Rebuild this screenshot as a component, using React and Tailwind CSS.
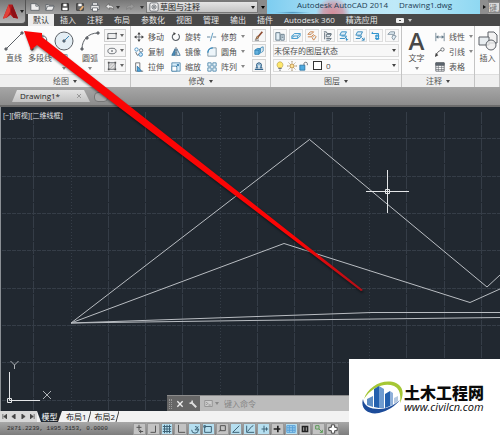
import React from "react";

const S = ({ children, className = "w-3 h-3", box = "0 0 12 12" }) => (
  <svg viewBox={box} className={className + " shrink-0"} fill="none" stroke="#5c6167" strokeWidth="1" aria-hidden="true">
    {children}
  </svg>
);

const Caret = ({ className = "text-[#444]" }) => (
  <svg viewBox="0 0 4 3" className={"w-1 h-[3px] shrink-0 " + className} aria-hidden="true">
    <path d="M0 0h4L2 3z" fill="currentColor" />
  </svg>
);

const icons = {
  newFile: <S><path d="M1 2h6l4 3v5H1z" fill="#eee" /><path d="M7 2v3h3" /></S>,
  open: <S><path d="M1 10V3h3l1 1h5v2" fill="#ddd" /><path d="M1 10l2-5h8l-2 5z" fill="#eee" /></S>,
  save: <S><path d="M2 2h8v8H2z" fill="#555" stroke="#222" /><path d="M4 2h4v3H4zM3 7h6v3H3z" fill="#fff" stroke="none" /></S>,
  saveAs: <S><path d="M2 2h8v8H2z" fill="#666" stroke="#333" /><path d="M4 2h4v3H4z" fill="#fff" stroke="none" /><path d="M6 10l4-5" stroke="#e8b070" strokeWidth="2" /></S>,
  print: <S><path d="M3 1h6v3H3z" fill="#fff" /><path d="M1 4h10v5H1z" fill="#e8e8e8" /><path d="M3 7h6v4H3z" fill="#fff" /></S>,
  undo: <S><path d="M1 5l4-3v2c4 0 6 2 5 5-1-2-2-2-5-2v2z" fill="#e4e4e4" stroke="#444" strokeWidth=".6" /></S>,
  redo: <S><path d="M11 5L7 2v2C3 4 1 6 2 9c1-2 2-2 5-2v2z" fill="#999" stroke="#777" strokeWidth=".6" /></S>,
  move: <S><path d="M6 2v8M2 6h8" /><path d="M6 0l2 3H4zM6 12l2-3H4zM0 6l3-2v4zM12 6L9 4v4z" fill="#444" stroke="none" /></S>,
  copy: <S><circle cx="3" cy="3" r="2" stroke="#3a8ac0" /><circle cx="8.500" cy="4" r="2" stroke="#5a6a78" /><circle cx="8" cy="9" r="2.200" stroke="#2b80bd" fill="#cfe8f8" /><path d="M2 6l2 4 2-1" /></S>,
  stretch: <S><path d="M2 1h5v10H2z" /><path d="M4 11V5l5 6z" fill="#58aee0" stroke="#2677b0" /><path d="M8 11h3" /></S>,
  rotate: <S><path d="M8.500 2.500A4.300 4.300 0 1 1 4 2" strokeWidth="1.300" /><path d="M3 0l3 2-3 2z" fill="#444" stroke="none" /></S>,
  mirror: <S><path d="M5 2v8H1z" fill="#4d8fbd" stroke="#336b93" /><path d="M7 2v8h4z" fill="#fff" stroke="#336b93" /><path d="M6 0v12" strokeDasharray="2 1" /></S>,
  scale: <S><path d="M1 1h10v10H1z" fill="#d8eefb" stroke="#4c84a8" /><path d="M1 5h6v6H1z" fill="#fff" stroke="#4c84a8" /><path d="M6 6l3-3M7 3h2v2" stroke="#2e75a5" /></S>,
  trim: <S><path d="M7 1L4 11" stroke="#468bb8" /><path d="M0 6h4M7 6h5" strokeDasharray="4 1" stroke="#4a7590" /></S>,
  fillet: <S><path d="M1 11V7c0-3 2-6 6-6h4v10z" fill="#edf5fa" stroke="#7b909e" /><path d="M1 7c0-3 2-6 6-6" stroke="#2f86bd" strokeWidth="1.500" /></S>,
  array: <S><path d="M1 1h4v4H1zM7 1h4v4H7zM1 7h4v4H1zM7 7h4v4H7z" fill="#eaf5fb" stroke="#4580a5" /></S>,
  erase: <S><path d="M5 7l5-6" stroke="#8e4b30" strokeWidth="2" /><path d="M2 10l2-4 2 2z" fill="#dca16c" stroke="#7c5d42" /><path d="M1 11h5" /></S>,
  explode: <S><path d="M1 5l3-2h4v5l-2 2H1z" fill="#65b1dd" stroke="#2d80b2" /><path d="M1 5h5v5M6 5l2-2M8 2l3-1v5l-2 2" stroke="#2d80b2" /></S>,
  offset: <S><path d="M1 10h10M2 8h2c-1-2-2-5 2-6 4 1 3 4 2 6h2" stroke="#33638a" strokeWidth="1.300" /><path d="M5 8c-1-2-1-3 1-4 2 1 2 2 1 4" stroke="#4c91c2" /></S>,
  rect: <S><path d="M1 3h10v6H1z" fill="#eee" /><path d="M0 8h2v2H0zM10 2h2v2h-2z" fill="#555" stroke="none" /></S>,
  ellipse: <S><ellipse cx="6" cy="6" rx="5" ry="3.300" /><path d="M6 5v2M5 6h2" /></S>,
  hatch: <S><path d="M2 2h8v8H2z" fill="#ddd" /><path d="M2 7l5-5M3 10l7-7M7 10l3-3" stroke="#999" strokeWidth=".7" /><path d="M1 1h2v2H1zM9 1h2v2H9zM1 9h2v2H1zM9 9h2v2H9z" fill="#555" stroke="none" /></S>,
  dim: <S><path d="M1 1v10M11 1v10M2 6h8" stroke="#667c8b" /><path d="M1 6l3-2v4zM11 6L8 4v4z" fill="#667c8b" stroke="none" /></S>,
  leader: <S><path d="M1 11c1-4 3-6 6-7" stroke="#444" /><path d="M0 12l1-5 3 3z" fill="#444" stroke="none" /><circle cx="9" cy="3" r="2" /></S>,
  table: <S><path d="M1 1h10v10H1z" fill="#fff" /><path d="M1 1h10v3H1z" fill="#5b6670" /><path d="M1 6.500h10M1 9h10M4 4v7M8 4v7" strokeWidth=".7" /></S>,
  bulb: <S><path d="M4 8C1 5 3 1 6 1s5 4 2 7z" fill="#ffe86b" stroke="#b39b47" strokeWidth=".8" /><path d="M4 9h4M5 11h2" /></S>,
  sun: <S><circle cx="6" cy="6" r="2.500" fill="#ffe49a" stroke="#ad7c32" /><path d="M6 0v2M6 10v2M0 6h2M10 6h2M2 2l1 1M9 9l1 1M2 10l1-1M9 3l1-1" stroke="#8f7447" /></S>,
  lock: <S><path d="M1 5h6v6H1z" fill="#4faae0" stroke="#2a74a4" /><path d="M6 5V3c0-2 4-2 4 0v2" stroke="#57606a" /></S>,
};

const layerTint = ["#6e8290", "#4d9fcf", "#d08a52", "#6e7a84", "#3d93c7", "#3f8fc0", "#3196cf", "#8a9aa6"];
const layerShapes = [
  "M1 2h5v9H1zM7 4h4v7H7zM8 6h2M8 8h2",
  "M1 6l3-3h7l-3 3zM1 9l3-3M1 9h7l3-3M1 6v3M8 6v3M11 3v3",
  "M1 4l3-3h4L5 4zM1 7h4l3-3M6 8l2 3 3-4-2-2z",
  "M1 1h3l1 2h5M4 4h6L8 7H4zM4 9h6l-2 2H4M2 2v8",
  "M3 1h6L7 5H1zM3 6h6L7 9H1M9 8v3M8 10l1 1 2-1",
  "M3 1h6L7 5H1zM3 6h5L6 9H1M8 8l3 3M11 8v3H8",
  "M1 3h8M2 1l-1 2M6 5h3v5H6zM5 6h5M5 9h5M9 3v2",
  "M1 4l3-3h5v3H1M7 5l4 1-3 5-2-3z",
];

const tabs = ["默认", "插入", "注释", "布局", "参数化", "视图", "管理", "输出", "插件", "Autodesk 360", "精选应用"];

const modify = [
  ["move", "移动"], ["rotate", "旋转"], ["trim", "修剪"],
  ["copy", "复制"], ["mirror", "镜像"], ["fillet", "圆角"],
  ["stretch", "拉伸"], ["scale", "缩放"], ["array", "阵列"],
];

function Panel({ title, className, children }) {
  return (
    <section className={"flex flex-col shrink-0 border-r border-[#c4c4c4] " + className}>
      <div className="flex h-12 pt-[3px]">{children}</div>
      <button className="flex items-center justify-center gap-1 h-[13px] bg-[#efefef] border-t border-[#dedede] text-[#555]">
        {title}
        {title && <Caret />}
      </button>
    </section>
  );
}

function BigTool({ label, caret, className, children }) {
  return (
    <button className={"flex flex-col items-center shrink-0 " + className}>
      <span className="flex items-center justify-center h-[23px]">{children}</span>
      <span className="h-[11px] leading-[11px]">{label}</span>
      {caret && <Caret className="text-[#888] mt-1" />}
    </button>
  );
}

function Tool({ icon, label, caret }) {
  return (
    <button className="flex items-center gap-1 h-[15px] whitespace-nowrap">
      <span className="flex [&>svg]:size-[10px]">{icons[icon]}</span>
      <span className="flex-1 text-left">{label}</span>
      {caret && <Caret className="text-[#888] mr-1" />}
    </button>
  );
}

function TitleBar() {
  const quick = ["newFile", "open", "save", "saveAs", "print", "undo"];
  return (
    <div className="flex h-[14px] items-center bg-linear-to-b from-[#777] to-[#a4a4a4] overflow-hidden">
      <div className="flex items-center gap-[5px] pl-1 w-[120px] shrink-0">
        {quick.map((q) => (
          <button key={q} aria-label={q} className="[&>svg]:size-[10px]">{icons[q]}</button>
        ))}
        <Caret className="text-[#333] -ml-1" />
        <button aria-label="redo" className="[&>svg]:size-[10px]">{icons.redo}</button>
        <Caret className="text-[#333]" />
      </div>
      <div className="flex items-center w-[112px] h-3 shrink-0 bg-linear-to-b from-[#e4e4e4] to-[#c4c4c4] border border-[#777] text-[#222]">
        <span className="flex pl-[2px] [&>svg]:size-[10px]">
          <S><rect x="1" y="1" width="10" height="10" rx="2" fill="#eee" /><circle cx="6" cy="6" r="2.500" /><circle cx="6" cy="6" r=".8" /></S>
        </span>
        <select aria-label="工作空间" className="flex-1 appearance-none bg-transparent h-[10px] leading-[10px] pl-[1px] outline-none">
          <option>草图与注释</option>
        </select>
        <span className="pr-[2px] flex"><Caret className="text-[#222]" /></span>
      </div>
      <span className="flex w-[9px] h-full shrink-0 items-center justify-center bg-[#8a8a8a]"><Caret className="text-black" /></span>
      <div className="flex flex-1 h-full items-start gap-[11px] pl-[30px] leading-[10px] text-[#1d3d55] whitespace-nowrap bg-[radial-gradient(circle_at_31%_100%,#d48c98_0,#c9a4b4_10px,transparent_17px),radial-gradient(ellipse_at_12%_90%,#4f94bb_0,transparent_18px),linear-gradient(90deg,#7dcdf0,#b6e3f6_35%,#bfe9f8_60%,#8fd8f2)]">
        <span>Autodesk AutoCAD 2014</span>
        <span>Drawing1.dwg</span>
      </div>
      <span className="flex w-2 h-full shrink-0 items-center justify-center bg-[#8e8e8e]">
        <svg viewBox="0 0 3 4" className="w-[3px] h-1"><path d="M0 0l3 2-3 2z" fill="#111" /></svg>
      </span>
      <input aria-label="搜索" placeholder="键入" className="w-3 h-[11px] shrink-0 bg-[#d9d9d9] border border-[#888] outline-none placeholder:text-[#777]" />
    </div>
  );
}

function Ribbon() {
  return (
    <div className="flex h-[61px] bg-[#fcfcfc] text-[#505050] overflow-hidden">
      <Panel title="绘图" className="w-[131px]">
        <BigTool label="直线" className="w-7">
          <S className="size-[20px]" box="0 0 20 20"><path d="M2 18L18 2" /><path d="M1 17h2v2H1zM17 1h2v2h-2z" fill="#777" /></S>
        </BigTool>
        <BigTool label="多段线" className="w-[24px] whitespace-nowrap">
          <S className="size-[20px]" box="0 0 20 20"><path d="M2 18L5 5h8c5 0 5 8 0 8h-3" /><path d="M1 17h2v2H1zM4 4h2v2H4z" fill="#777" /></S>
        </BigTool>
        <BigTool label="圆" caret className="w-[24px]">
          <S className="size-[20px]" box="0 0 20 20"><circle cx="10" cy="10" r="9" fill="#e4eef4" /><path d="M10 10l5-5" stroke="#3a86b5" /><path d="M9 9h2v2H9z" fill="#3a86b5" /></S>
        </BigTool>
        <BigTool label="圆弧" caret className="w-[28px]">
          <S className="size-[20px]" box="0 0 20 20"><path d="M2 18C2 9 8 2 18 2" /><path d="M1 17h2v2H1zM6 6h2v2H6zM17 1h2v2h-2z" fill="#777" /></S>
        </BigTool>
        <div className="flex flex-col gap-[2px]">
          {["rect", "ellipse", "hatch"].map((n) => (
            <button key={n} aria-label={n} className="flex items-center justify-around w-[22px] h-[13px] border border-[#d0d0d0] bg-[#f6f6f6] [&>svg:first-child]:size-[10px]">
              {icons[n]}
              <Caret className="text-[#666]" />
            </button>
          ))}
        </div>
      </Panel>

      <Panel title="修改" className="w-[140px]">
        <div className="grid grid-cols-[37px_36px_41px] pl-[3px] content-start">
          {modify.map(([icon, label], i) => <Tool key={icon} icon={icon} label={label} caret={i % 3 === 2} />)}
        </div>
        <div className="flex flex-col gap-[2px] pl-1">
          {["erase", "explode", "offset"].map((n) => (
            <button key={n} aria-label={n} className="flex items-center justify-center w-[14px] h-[13px] border border-[#d4d4d4] bg-[#f6f6f6] [&>svg]:size-[10px]">{icons[n]}</button>
          ))}
        </div>
      </Panel>

      <Panel title="图层" className="w-[131px]">
        <div className="flex flex-col flex-1 px-[2px] gap-[2px]">
          <div className="flex justify-between">
            {layerShapes.map((d, i) => (
              <button key={d} aria-label={"图层工具 " + (i + 1)} className="flex items-center justify-center w-[14px] h-[13px] border border-[#dedede] bg-[#f8f8f8]">
                <svg viewBox="0 0 12 12" className="size-[10px]" fill="#e3eff6" stroke={layerTint[i]} strokeWidth="1.200"><path d={d} /></svg>
              </button>
            ))}
          </div>
          <div className="flex items-center h-[13px] border border-[#dcdcdc] bg-[#f7f7f7] pr-[2px]">
            <select aria-label="图层状态" className="flex-1 appearance-none bg-transparent h-[11px] leading-[11px] outline-none"><option>未保存的图层状态</option></select>
            <Caret />
          </div>
          <div className="flex items-center gap-[2px] h-[13px] border border-[#dcdcdc] bg-[#fafafa] pl-[1px] pr-[2px] [&>svg]:size-[10px] [&>svg:last-child]:w-1 [&>svg:last-child]:h-[3px]">
            {icons.bulb}{icons.sun}{icons.lock}
            <span className="size-[9px] border border-[#333] bg-white ml-[2px]" />
            <select aria-label="图层" className="flex-1 appearance-none bg-transparent h-[11px] leading-[11px] pl-[2px] outline-none"><option>0</option></select>
            <Caret />
          </div>
        </div>
      </Panel>

      <Panel title="注释" className="w-[73px]">
        <BigTool label="文字" caret className="w-[29px]">
          <span className="text-[24px] leading-[23px] font-semibold text-[#484848]">A</span>
        </BigTool>
        <div className="flex flex-col flex-1 pl-1">
          <Tool icon="dim" label="线性" caret />
          <Tool icon="leader" label="引线" caret />
          <Tool icon="table" label="表格" />
        </div>
      </Panel>

      <Panel title="" className="flex-1 min-w-[25px]">
        <BigTool label="插入" className="w-[25px]">
          <S className="size-[20px]" box="0 0 20 20"><path d="M10 1h6l3 3v8h-9z" fill="#f2f2f2" /><path d="M1 6h10v8H1z" fill="#e8edf0" /><circle cx="13" cy="14" r="5" fill="#eee" fillOpacity=".8" /></S>
        </BigTool>
      </Panel>
    </div>
  );
}

const gridX = [33, 71, 108, 145, 182, 220, 257, 294, 332, 369, 406, 444, 481];
const gridY = [31, 69, 106, 143, 181, 218, 255, 293];

function Canvas() {
  return (
    <div className="relative flex-1 min-h-[304px] bg-[#212830] border-l border-[#8a8f94] overflow-hidden">
      <svg viewBox="1 0 499 304" preserveAspectRatio="xMinYMin slice" className="absolute inset-0 w-full h-full" fill="none">
        <g stroke="#353d47">
          {gridX.map((x, i) => <path key={x} d={`M${x + 0.5} 5V304`} strokeDasharray={i % 4 === 1 ? "1 2" : "12 1"} />)}
          {gridY.map((y) => <path key={y} d={`M2 ${y + 0.5}H500`} strokeDasharray="4 1" />)}
        </g>
        <g stroke="#b9bdc2" strokeWidth="1">
          <path d="M71 216L309.500 32.500 487 180l13-12" />
          <path d="M71 216L284 136.500 470 195.500 500 182" />
          <path d="M71 216L372 205.500H500" />
          <path d="M71 216L250 213.500 500 210.500" />
        </g>
        <g stroke="#e4e6e8">
          <path d="M387.500 63v43M366 84.500h43M385.500 82.500h4v4h-4z" />
          <path d="M9.500 265v28.500H40M7.500 291.500h4v4h-4z" />
          <path d="M43 284l8 8M51 284l-8 8M10.500 254l4 4 4-4M14.500 258v4" stroke="#aeb2b6" />
        </g>
      </svg>
      <p className="relative pl-[2px] pt-1 text-[7px] leading-[10px] text-[#e2e4e6]">[−][俯视][二维线框]</p>
      <div className="absolute left-[166px] right-0 bottom-0 flex h-4 items-center bg-[#bcbcbc] border-t border-[#8b8b8b]">
        <div className="flex items-center h-full w-[33px] bg-[#666] pl-[2px] gap-1">
          <span className="w-[3px] h-[10px] border-x border-dotted border-[#999]" />
          <button aria-label="关闭"><S className="size-[8px]"><path d="M2 2l8 8M10 2l-8 8" stroke="#eee" strokeWidth="2" /></S></button>
          <button aria-label="自定义"><S className="size-[9px]"><path d="M4 4l7 7" stroke="#ddd" strokeWidth="2.500" /><path d="M5 1a3 3 0 1 1-4 4l2 0 2-2z" fill="#ddd" stroke="none" /></S></button>
        </div>
        <span className="flex items-center gap-[2px] pl-1">
          <S className="size-[9px]"><path d="M1 2h10v8H1z" fill="#ccc" stroke="#888" /><path d="M3 4l2 2-2 2M6 8h3" stroke="#777" /></S>
          <Caret className="text-[#888]" />
        </span>
        <input aria-label="命令行" placeholder="键入命令" className="flex-1 min-w-0 pl-[5px] h-3 leading-3 bg-transparent outline-none placeholder:text-[#858585]" />
      </div>
    </div>
  );
}

const status = [
  ["M6 1v7M3 4h6M8 7v4M6 9h5", 0], ["M9 2v8H3", 0], ["M1 3h10M1 6h10M1 9h10M3 1v10M6 1v10M9 1v10", 1],
  ["M3 1v9h8", 0], ["M2 7a4 4 0 1 0 4-4M6 7h5M6 7l4-4", 1], ["M2 3h8v7H2zM1 2h2v2H1z", 1], ["M4 2h6v6H4zM2 9l3-2", 0],
  ["M10 2L2 10h8", 1], ["M2 2v8h9M3 9l5-6M8 3l2-1", 1], ["M6 2v8M3 6h8M9 4v4", 1], ["M7 2v8M2 6h8", 2],
  ["M1 2h10v8H1zM1 4h10M1 6h10M1 8h10M4 2v8M8 2v8", 5], ["M3 3h6v6H3zM6 3v6", 2], ["M2 2h4v4H2zM6 6l4 4M7 10h3V7", 3], ["M4 1h4v3h3v4H8v3H4V8H1V4h3z", 4],
];
const statusStroke = ["#555", "#3f6478", "#222", "#5b9b57", "#444", "#5aa0d8"];
const statusFill = ["none", "none", "none", "none", "#fff", "none"];

function StatusBar() {
  return (
    <footer className="flex h-[13px] items-center bg-linear-to-b from-[#a8a8a8] to-[#7d7d7d] overflow-hidden">
      <p className="w-[133px] shrink-0 pl-[7px] font-['Liberation_Mono',monospace] text-[6px] leading-[10px] text-[#2b2b2b] whitespace-pre">2871.2239, 1895.3153, 0.0000</p>
      <div className="flex w-[206px] shrink-0 gap-px h-3">
        {status.map(([d, tone], i) => (
          <button key={d} aria-label={"状态 " + (i + 1)} className={"flex flex-1 items-center justify-center border border-[#999] " + (tone === 1 || tone === 5 ? "bg-[#b6dff0]" : "bg-[#c3c3c3]")}>
            <svg viewBox="0 0 12 12" className="size-[10px] shrink-0" fill={statusFill[tone]} stroke={statusStroke[tone]} strokeWidth={tone === 2 ? 2 : 1.2}><path d={d} /></svg>
          </button>
        ))}
      </div>
    </footer>
  );
}

export default function App() {
  return (
    <main lang="zh-CN" className="relative flex flex-col min-h-screen overflow-hidden font-['Open_Sans','Noto_Sans_CJK_SC',sans-serif] text-[8px] leading-[10px]">
      <header className="flex h-[26px] bg-[#484848]">
        <button aria-label="应用程序菜单" className="flex items-center gap-px w-[26px] h-6 shrink-0 pl-[2px] rounded-br-sm border-r border-b border-[#555] bg-linear-to-b from-[#777] to-[#b5b5b5]">
          <svg viewBox="0 0 18 20" className="w-[17px] h-5 shrink-0">
            <path d="M1 17L7 2h4l6 15-5-1-3-3-4 3z" fill="#b51a1c" />
            <path d="M7 2l2 7-4 7-4 1z" fill="#e04038" />
            <path d="M9 9l3 7 5 1L11 2z" fill="#8e1116" />
          </svg>
          <Caret className="text-[#222]" />
        </button>
        <div className="flex flex-col flex-1 min-w-0">
          <TitleBar />
          <nav className="flex gap-px h-3 pl-[2px] text-[#e8e8e8] whitespace-nowrap">
            {tabs.map((t, i) => (
              <button key={t} className={"px-[5px] leading-3 " + (i === 0 ? "bg-[#ececec] text-[#333]" : "")}>{t}</button>
            ))}
            <button aria-label="最小化功能区" className="flex items-center gap-1 pl-3">
              <span className="w-2 h-[5px] rounded-[1px] bg-[#eee] flex items-center justify-center"><span className="w-[2px] h-px bg-[#444]" /></span>
              <Caret className="text-[#ccc]" />
            </button>
          </nav>
        </div>
      </header>

      <Ribbon />

      <div className="flex h-5 shrink-0 items-end bg-linear-to-b from-[#a6a6a6] to-[#8c8c8c] border-b-2 border-[#6c6c6c] pl-3 pb-[3px]">
        <button className="flex items-center justify-between w-[78px] h-3 pl-2 pr-2 text-[#222] bg-linear-to-b from-[#e2e2e2] to-[#c4c4c4] [clip-path:polygon(5px_0,72px_0,78px_100%,0_100%)]">
          Drawing1*
          <S className="size-[6px]"><path d="M2 2l8 8M10 2l-8 8" stroke="#999" strokeWidth="2" /></S>
        </button>
        <button aria-label="新图形" className="ml-1 w-[14px] h-[10px] rounded-sm border border-[#777] bg-[#aaa]" />
      </div>

      <Canvas />

      <div className="flex h-[11px] shrink-0 items-stretch bg-[#f2f2f2] text-[#111]">
        <div className="flex items-center w-[37px] justify-around bg-[#d8d8d8] text-[#444]">
          {["M1 0v6M6 0L2 3l4 3z", "M5 0L1 3l4 3z", "M1 0l4 3-4 3z", "M0 0l4 3-4 3zM5 0v6"].map((d, i) => (
            <button key={d} aria-label={"布局导航 " + (i + 1)}><svg viewBox="0 0 6 6" className="size-[5px]" fill="currentColor" stroke="currentColor" strokeWidth=".8"><path d={d} /></svg></button>
          ))}
        </div>
        <button className="w-[25px] bg-[#212830] text-white leading-[11px] [clip-path:polygon(0_0,100%_0,21px_100%,4px_100%)]">模型</button>
        {["布局1", "布局2"].map((t) => (
          <button key={t} className="flex items-center pl-1 leading-[11px]">
            {t}
            <svg viewBox="0 0 4 11" className="w-1 h-[11px]"><path d="M4 0L1 11" stroke="#444" /></svg>
          </button>
        ))}
      </div>

      <StatusBar />

      <svg viewBox="0 0 370 300" className="absolute left-0 top-0 w-[370px] h-[300px] pointer-events-none drop-shadow-[1px_2px_1px_rgba(0,0,0,0.5)]">
        <defs>
          <linearGradient id="shaft" x1="0" y1="0" x2="1" y2="1">
            <stop offset=".8" stopColor="#fb0505" />
            <stop offset="1" stopColor="#b01018" />
          </linearGradient>
        </defs>
        <path d="M24 31L42 33 42 37 363 290 361 291 37 45 31 50z" fill="url(#shaft)" />
      </svg>

      <aside className="absolute right-0 bottom-0 flex items-center w-[151px] h-[76px] pl-[13px] bg-white">
        <svg viewBox="0 0 42 36" className="w-[42px] h-9 shrink-0" fill="none">
          <path d="M2 20C6 7 22-1 34 4c8 4 8 12 4 20 1-8 0-14-6-17C22 3 9 9 2 20z" fill="#a5c735" />
          <path d="M1 20c-3 10 5 16 16 14 9-2 16-7 21-13-7 6-14 9-21 9C8 30 2 27 1 20z" fill="#1d4c9a" />
          <path d="M5 20l6-3v11l-6-2z" fill="#5d8cc4" />
          <path d="M12 10l5-3v22l-5-1z" fill="#2460ae" />
          <path d="M17 7l5 3v19h-5z" fill="#6f9bd0" />
          <path d="M23 15l5-3v15l-5 2z" fill="#2460ae" />
          <path d="M28 12l3 2v12l-3 1z" fill="#8fb0da" />
          <path d="M32 19l4-2v5l-4 3z" fill="#b4c8df" />
        </svg>
        <div className="flex flex-col gap-px pt-[2px] whitespace-nowrap text-[#0b0b0b]">
          <strong className="font-['Noto_Sans_CJK_SC',sans-serif] font-black text-[16px] leading-4">土木工程网</strong>
          <a href="#site" className="text-[11px] leading-3 italic font-medium">www.civilcn.com</a>
        </div>
      </aside>
    </main>
  );
}
